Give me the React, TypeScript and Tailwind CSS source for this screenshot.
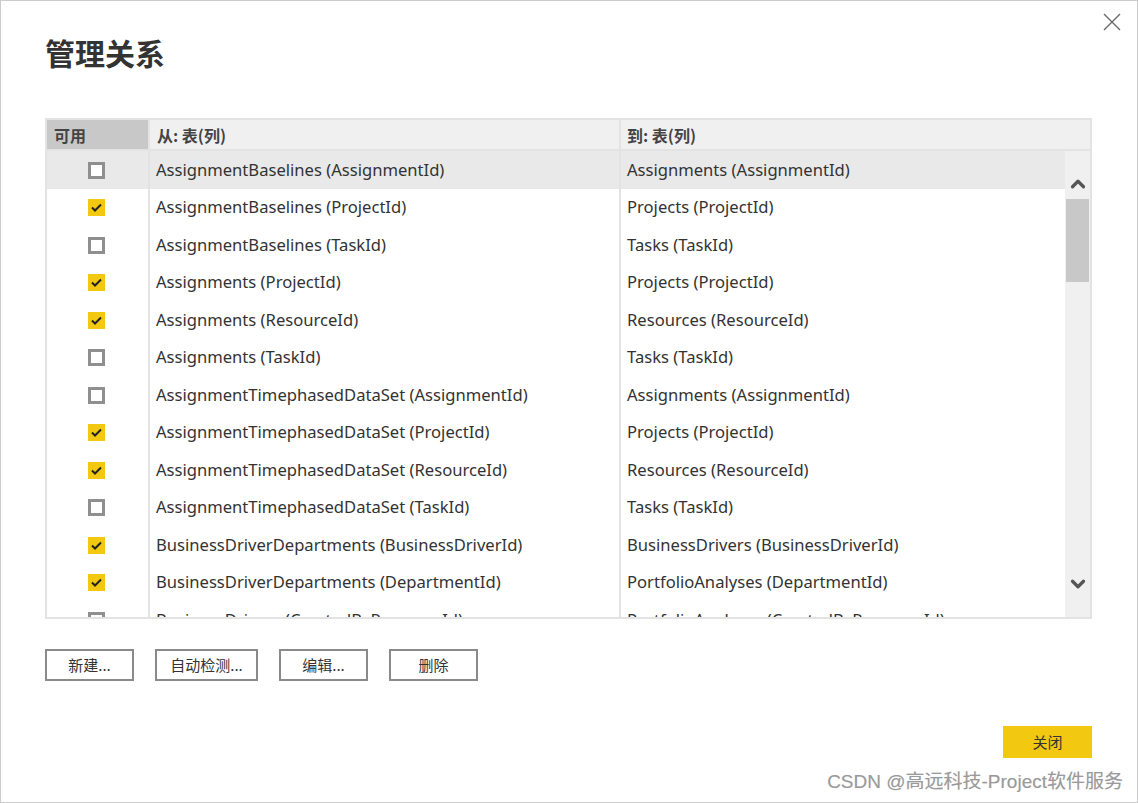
import { ChevronUp, ChevronDown } from 'lucide-react';

const ROWS: { from: string; to: string; on: boolean }[] = [
  { from: 'AssignmentBaselines (AssignmentId)', to: 'Assignments (AssignmentId)', on: false },
  { from: 'AssignmentBaselines (ProjectId)', to: 'Projects (ProjectId)', on: true },
  { from: 'AssignmentBaselines (TaskId)', to: 'Tasks (TaskId)', on: false },
  { from: 'Assignments (ProjectId)', to: 'Projects (ProjectId)', on: true },
  { from: 'Assignments (ResourceId)', to: 'Resources (ResourceId)', on: true },
  { from: 'Assignments (TaskId)', to: 'Tasks (TaskId)', on: false },
  { from: 'AssignmentTimephasedDataSet (AssignmentId)', to: 'Assignments (AssignmentId)', on: false },
  { from: 'AssignmentTimephasedDataSet (ProjectId)', to: 'Projects (ProjectId)', on: true },
  { from: 'AssignmentTimephasedDataSet (ResourceId)', to: 'Resources (ResourceId)', on: true },
  { from: 'AssignmentTimephasedDataSet (TaskId)', to: 'Tasks (TaskId)', on: false },
  { from: 'BusinessDriverDepartments (BusinessDriverId)', to: 'BusinessDrivers (BusinessDriverId)', on: true },
  { from: 'BusinessDriverDepartments (DepartmentId)', to: 'PortfolioAnalyses (DepartmentId)', on: true },
  { from: 'BusinessDrivers (CreatedByResourceId)', to: 'PortfolioAnalyses (CreatedByResourceId)', on: false },
];

const CJK = "font-['Noto_Sans_CJK_SC',sans-serif]";

function Check({ on }: { on: boolean }) {
  if (!on) return <span className="block w-[17px] h-[17px] border-[3px] border-[#8f8f8f] bg-white" />;
  return (
    <span className="flex items-center justify-center w-[17px] h-[17px] bg-[#f2c811]">
      <svg width="11" height="9" viewBox="0 0 11 9">
        <path d="M1 4.5 L4 7.5 L10 1.5" fill="none" stroke="#222" strokeWidth="2" />
      </svg>
    </span>
  );
}

function Btn({ label, w }: { label: string; w: string }) {
  return (
    <button className={`h-[32px] ${w} border-2 border-[#8a8a8a] bg-white text-[15px] text-[#333] ${CJK}`}>
      {label}
    </button>
  );
}

export default function App() {
  return (
    <div className="relative w-[1138px] h-[803px] border border-[#cccccc] bg-white px-[44px] pt-[31px] overflow-hidden">
      {/* close */}
      <svg className="absolute right-[16px] top-[12px]" width="18" height="18" viewBox="0 0 18 18">
        <path d="M1 1 L17 17 M17 1 L1 17" stroke="#6a6a6a" strokeWidth="1.4" />
      </svg>

      <h1 className={`text-[30px] leading-[40px] font-bold text-[#333] ${CJK}`}>管理关系</h1>

      {/* table */}
      <div className="mt-[46px] w-[1047px] h-[501px] border-2 border-[#e3e3e3] flex flex-col overflow-hidden">
        <div className={`flex h-[31px] shrink-0 border-b-2 border-[#e3e3e3] bg-[#f0f0f0] text-[16px] font-bold text-[#444] ${CJK}`}>
          <div className="w-[103px] border-r-2 border-[#e3e3e3] bg-[#c8c8c8] pl-[7px] flex items-center">可用</div>
          <div className="w-[471px] border-r-2 border-[#e3e3e3] pl-[7px] flex items-center">从: 表(列)</div>
          <div className="flex-1 pl-[6px] flex items-center">到: 表(列)</div>
        </div>
        <div className="flex flex-1 min-h-0">
          <div className="flex-1 overflow-hidden font-['Noto_Sans',sans-serif] text-[16.6px] text-[#333]">
            {ROWS.map((r, i) => (
              <div key={i} className={`flex h-[37.5px] ${i === 0 ? 'bg-[#e9e9e9]' : 'bg-white'}`}>
                <div className="w-[103px] shrink-0 border-r-2 border-[#e3e3e3] flex items-center justify-center pr-[2px] pt-[1px]">
                  <Check on={r.on} />
                </div>
                <div className="w-[471px] shrink-0 border-r-2 border-[#e3e3e3] pl-[6px] pt-[1px] flex items-center whitespace-nowrap">{r.from}</div>
                <div className="flex-1 pl-[6px] pt-[1px] flex items-center whitespace-nowrap">{r.to}</div>
              </div>
            ))}
          </div>
          {/* scrollbar */}
          <div className="w-[25px] shrink-0 bg-[#f0f0f0] flex flex-col items-center">
            <ChevronUp className="mt-[22px] text-[#555]" size={22} strokeWidth={3.5} />
            <div className="mt-[4px] w-[23px] h-[83px] bg-[#c8c8c8]" />
            <div className="flex-1" />
            <ChevronDown className="mb-[22px] text-[#555]" size={22} strokeWidth={3.5} />
          </div>
        </div>
      </div>

      <div className="mt-[30px] flex gap-[21px]">
        <Btn label="新建..." w="w-[89px]" />
        <Btn label="自动检测..." w="w-[103px]" />
        <Btn label="编辑..." w="w-[89px]" />
        <Btn label="删除" w="w-[89px]" />
      </div>

      <div className="mt-[45px] w-[1047px] flex justify-end">
        <button className={`h-[32px] w-[89px] bg-[#f2c811] text-[15px] text-[#333] ${CJK}`}>关闭</button>
      </div>

      <div className={`absolute right-[14px] bottom-[6px] text-[19px] text-[#9a9a9a] font-['Liberation_Sans','Noto_Sans_CJK_SC',sans-serif] [text-shadow:0_0_1px_#ddd]`}>
        CSDN @高远科技-Project软件服务
      </div>
    </div>
  );
}
